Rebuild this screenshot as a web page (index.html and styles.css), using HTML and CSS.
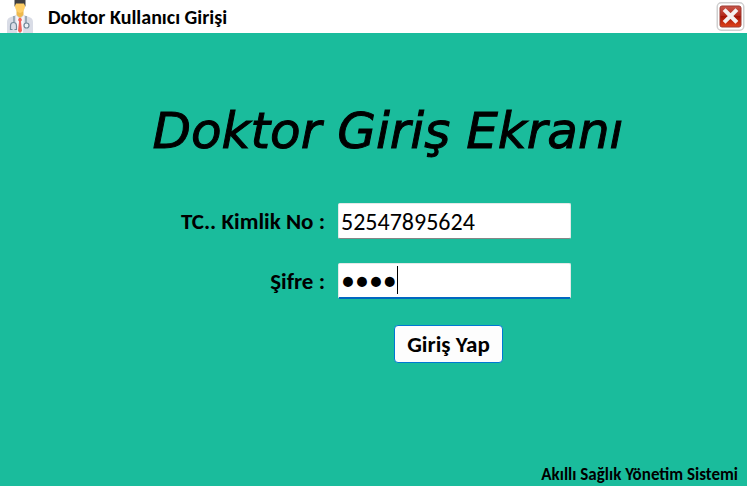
FILE: index.html
```html
<!DOCTYPE html>
<html lang="tr">
<head>
  <meta charset="utf-8">
  <meta name="viewport" content="width=device-width, initial-scale=1">
  <title>Doktor Kullanıcı Girişi</title>
  <link rel="stylesheet" href="styles.css">
</head>
<body>
  <header class="titlebar">
    <svg class="doctor" viewBox="0 0 28 33" aria-hidden="true">
      <path d="M1 33V22Q1 18 5 17L10 15H18L23 17Q27 18 27 22V33Z" fill="#d9dce6"/>
      <path d="M10 15L14 20L18 15L17 33H11Z" fill="#f7f7fb"/>
      <path d="M10.500 10H17.500V15L14 18L10.500 15Z" fill="#eeb94e"/>
      <path d="M9 2H19V7Q18 12 14 13Q10 12 9 7Z" fill="#ffcf67"/>
      <path d="M8.500 7V0H19.500V7L18 3.500H10Z" fill="#3e3e40"/>
      <path d="M13 18H15L16 20L15 21.500L16 31L14 33L12 31L13 21.500L12 20Z" fill="#f0645a"/>
      <path d="M8 16V22M6.500 29.500H4.500V26Q4.500 22.500 7.500 22.500Q10.500 22.500 10.500 26V29.500H8.500M20 16V23" fill="none" stroke="#73899a" stroke-width="1.2"/>
      <circle cx="20.500" cy="25.500" r="2.500" fill="#eef1f6" stroke="#73899a" stroke-width="1.2"/>
    </svg>
    <h1 class="caption">Doktor Kullanıcı Girişi</h1>
    <button class="close" type="button" aria-label="Kapat">
      <svg class="close-icon" viewBox="0 0 28 29" aria-hidden="true">
        <defs>
          <linearGradient id="red" x1="0" y1="0" x2="0" y2="1">
            <stop offset="0" stop-color="#c9564a"/>
            <stop offset=".45" stop-color="#b52a1c"/>
            <stop offset=".5" stop-color="#a41305"/>
            <stop offset="1" stop-color="#e0441c"/>
          </linearGradient>
        </defs>
        <rect x=".75" y=".75" width="26.500" height="27.500" rx="4" fill="#fff" stroke="#cfcfcf" stroke-width="1.500"/>
        <rect x="3.500" y="4" width="21" height="21" rx="2" fill="url(#red)" stroke="#9c3a32"/>
        <path d="M9 9L19 19M19 9L9 19" stroke="#f4efef" stroke-width="4" stroke-linecap="square"/>
      </svg>
    </button>
  </header>
  <main class="screen">
    <h2 class="heading">Doktor Giriş Ekranı</h2>
    <form class="login">
      <label class="label" for="tc">TC.. Kimlik No :</label>
      <input class="field" id="tc" type="text" value="52547895624">
      <label class="label" for="sifre">Şifre :</label>
      <div class="password">
        <input class="field field-active" id="sifre" type="password" value="1234">
        <span class="caret"></span>
      </div>
      <button class="submit" type="submit">Giriş Yap</button>
    </form>
  </main>
  <footer class="footer">Akıllı Sağlık Yönetim Sistemi</footer>
</body>
</html>
```

FILE: styles.css
```css
* {
  box-sizing: border-box;
}

body {
  margin: 0;
  min-height: 100vh;
  display: flex;
  flex-direction: column;
  background: #1abc9c;
  color: #000;
  font-family: Carlito, Calibri, Lato, sans-serif;
  font-weight: 700;
}

.titlebar {
  display: flex;
  align-items: center;
  height: 33px;
  padding: 0 2px 0 6px;
  background: #fff;
}

.doctor {
  width: 28px;
  height: 33px;
}

.caption {
  flex: 1;
  margin: 0 0 0 14px;
  font-size: 20px;
  line-height: 24px;
}

.close {
  display: flex;
  padding: 0;
  border: 0;
  background: none;
}

.close-icon {
  width: 29px;
  height: 29px;
}

.screen {
  flex: 1;
  padding-top: 64px;
}

.heading {
  margin: 0 0 38px;
  padding-left: 29px;
  text-align: center;
  font-family: "Segoe Script", "Ink Free", "DejaVu Sans", cursive;
  font-size: 50px;
  font-style: italic;
  font-weight: 400;
  line-height: 68px;
  -webkit-text-stroke: 1px #000;
}

.login {
  display: grid;
  grid-template-columns: 149px 233px;
  justify-content: center;
  align-items: center;
  gap: 24px 13px;
}

.label {
  text-align: right;
  white-space: nowrap;
  font-size: 23px;
  line-height: 28px;
}

.field {
  display: block;
  width: 100%;
  height: 36px;
  padding: 0 2px;
  border: 1px solid #e3e9e8;
  border-bottom-color: #868686;
  border-radius: 2px;
  outline: 0;
  background: #fff;
  color: #000;
  font-family: Carlito, Calibri, Lato, sans-serif;
  font-size: 24px;
}

.field-active {
  border-bottom: 2px solid #0067c0;
  font-size: 28px;
}

.password {
  position: relative;
}

.caret {
  position: absolute;
  top: 3px;
  left: 59px;
  width: 1px;
  height: 28px;
  background: #000;
}

.submit {
  grid-column: 2;
  justify-self: start;
  width: 109px;
  height: 38px;
  margin: 2px 0 0 56px;
  padding: 0;
  border: 1px solid #0078d4;
  border-radius: 4px;
  background: #fdfdfd;
  color: #000;
  font: inherit;
  font-size: 23px;
}

.footer {
  padding: 0 9px 1px;
  text-align: right;
  font-size: 17px;
  line-height: 20px;
}
```
